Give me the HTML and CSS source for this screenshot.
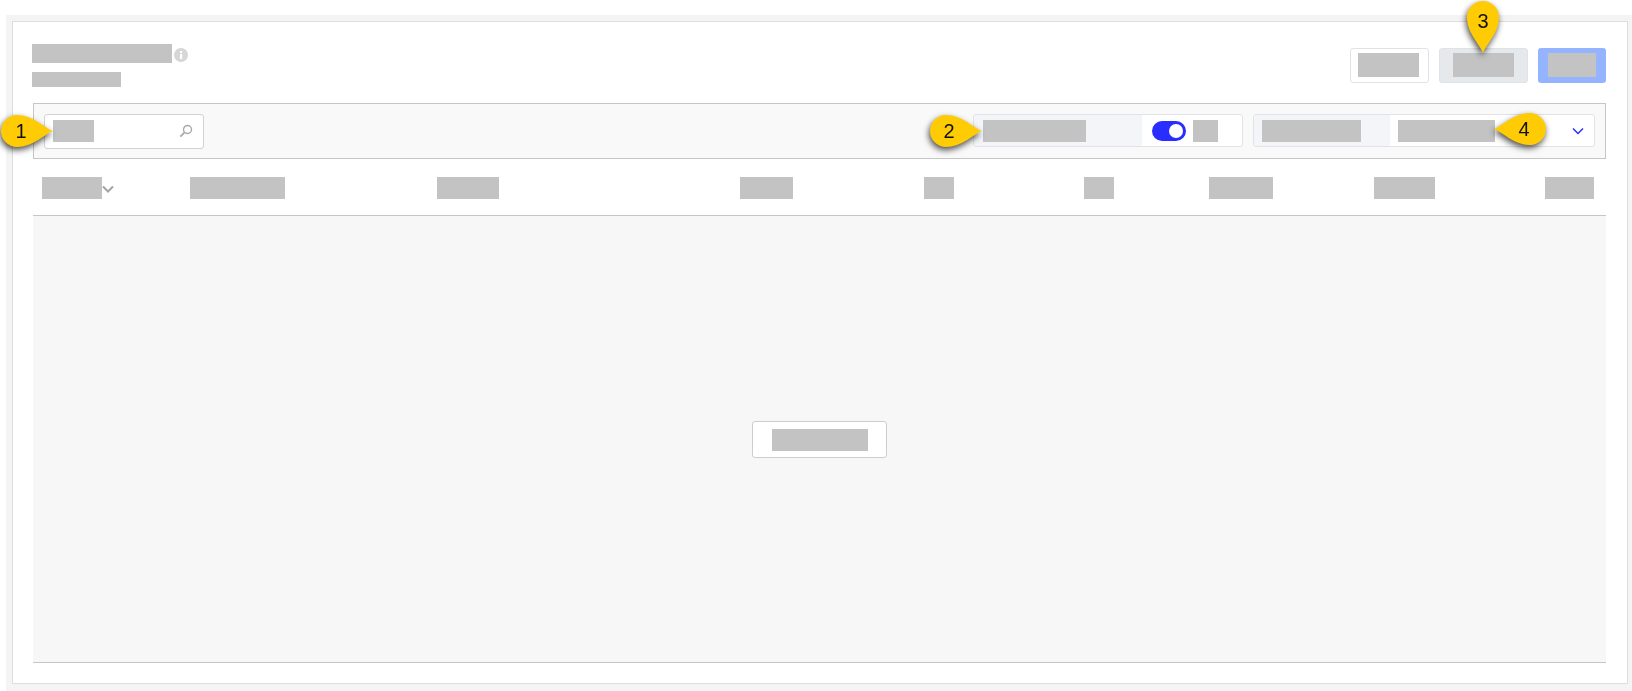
FILE: index.html
```html
<!DOCTYPE html>
<html lang="en">
<head>
  <meta charset="UTF-8" />
  <meta name="viewport" content="width=device-width, initial-scale=1.0"/>
  <title>Table settings</title>
  <link rel="stylesheet" href="styles.css">
</head>
<body>
  <div class="shell">
    <div class="card">
      <div class="page-head">
        <div class="head-left">
          <div class="title-row">
            <span class="bar bar-title"></span>
            <svg class="info-icon" viewBox="0 0 14 14">
              <circle cx="7" cy="7" r="7" fill="#d6d6d6"/>
              <rect x="6" y="6" width="2.2" height="5" fill="#fff"/>
              <rect x="6" y="3" width="2.2" height="2" fill="#fff"/>
            </svg>
          </div>
          <span class="bar bar-sub"></span>
        </div>
        <div class="head-actions">
          <div class="btn btn-plain"><span class="bar bar-btn"></span></div>
          <div class="btn btn-grey"><span class="bar bar-btn"></span></div>
          <div class="btn btn-blue"><span class="bar bar-btn-sm"></span></div>
        </div>
      </div>

      <div class="toolbar">
        <div class="search">
          <span class="bar bar-search"></span>
          <svg class="search-icon" viewBox="0 0 14 14">
            <circle cx="8.5" cy="5.5" r="4" fill="none" stroke="#a8a8a8" stroke-width="1.4"/>
            <path d="M5.6 8.4 1.4 12.6" stroke="#a8a8a8" stroke-width="1.8" fill="none"/>
          </svg>
        </div>
        <div class="toolbar-right">
          <div class="field field-toggle">
            <div class="field-label"><span class="bar bar-toggle-label"></span></div>
            <div class="field-value">
              <span class="toggle"><span class="toggle-knob"></span></span>
              <span class="bar bar-on"></span>
            </div>
          </div>
          <div class="field field-select">
            <div class="field-label"><span class="bar bar-select-label"></span></div>
            <div class="field-value">
              <span class="bar bar-select-value"></span>
              <svg class="select-arrow" viewBox="0 0 12 8">
                <path d="M1 1.5 6 6.5 11 1.5" fill="none" stroke="#2a2dff" stroke-width="1.5"/>
              </svg>
            </div>
          </div>
        </div>
      </div>

      <div class="table-head">
        <div class="col col-sort">
          <span class="bar bar-c1"></span>
          <svg class="sort-icon" viewBox="0 0 12 8">
            <path d="M1 1.5 6 6.5 11 1.5" fill="none" stroke="#a3a3a3" stroke-width="2"/>
          </svg>
        </div>
        <div class="col"><span class="bar bar-c2"></span></div>
        <div class="col"><span class="bar bar-c3"></span></div>
        <div class="col"><span class="bar bar-c4"></span></div>
        <div class="col"><span class="bar bar-c5"></span></div>
        <div class="col"><span class="bar bar-c6"></span></div>
        <div class="col"><span class="bar bar-c7"></span></div>
        <div class="col"><span class="bar bar-c8"></span></div>
        <div class="col"><span class="bar bar-c9"></span></div>
      </div>

      <div class="table-empty">
        <div class="empty-btn"><span class="bar bar-empty"></span></div>
      </div>
    </div>
  </div>

  <!-- numbered callouts on top of the screenshot -->
  <svg class="pin pin-1" viewBox="0 0 54 34">
    <path d="M53 17C43 13 33 1 17 1A16 16 0 0 0 17 33C33 33 43 21 53 17Z" fill="#ffcb05"/>
    <text x="21" y="24" text-anchor="middle">1</text>
  </svg>
  <svg class="pin pin-2" viewBox="0 0 54 34">
    <path d="M53 17C43 13 33 1 17 1A16 16 0 0 0 17 33C33 33 43 21 53 17Z" fill="#ffcb05"/>
    <text x="20" y="24" text-anchor="middle">2</text>
  </svg>
  <svg class="pin pin-3" viewBox="0 0 34 54">
    <path d="M17 53C13 43 1 33 1 17A16 16 0 0 1 33 17C33 33 21 43 17 53Z" fill="#ffcb05"/>
    <text x="17" y="28" text-anchor="middle">3</text>
  </svg>
  <svg class="pin pin-4" viewBox="0 0 54 34">
    <path d="M1 17C11 13 21 1 37 1A16 16 0 0 1 37 33C21 33 11 21 1 17Z" fill="#ffcb05"/>
    <text x="31" y="24" text-anchor="middle">4</text>
  </svg>
</body>
</html>
```

FILE: styles.css
```css
* {
  margin: 0;
  padding: 0;
  box-sizing: border-box;
  font-family: "Liberation Sans", sans-serif;
}

html, body {
  height: 100%;
  background: #fff;
  overflow: hidden;
}

body {
  padding: 15px 0 0 6px;
}

.shell {
  height: 676px;
  background: #f4f4f4;
  padding: 6px 4px 7px 6px;
}

.card {
  height: 663px;
  background: #fff;
  border: 1px solid #dedede;
  padding: 22px 21px 0 20px;
}

.bar {
  display: block;
  background: #c3c3c3;
  height: 22px;
  flex-shrink: 0;
}

/* header */
.page-head {
  display: flex;
  justify-content: space-between;
  height: 59px;
}

.title-row {
  display: flex;
  align-items: center;
  gap: 2px;
  margin-left: -1px;
  margin-bottom: 9px;
}

.bar-title {
  width: 140px;
  height: 19px;
}

.info-icon {
  width: 14px;
  height: 14px;
  margin-top: 2px;
}

.bar-sub {
  width: 89px;
  height: 15px;
  margin-left: -1px;
}

.head-actions {
  display: flex;
  gap: 10px;
  margin-top: 4px;
}

.btn {
  height: 35px;
  border-radius: 3px;
  display: flex;
  align-items: center;
  justify-content: center;
  padding-bottom: 1px;
}

.bar-btn {
  width: 61px;
  height: 24px;
}

.bar-btn-sm {
  width: 48px;
  height: 24px;
}

.btn-plain {
  width: 79px;
  background: #fff;
  border: 1px solid #dfe3e8;
  padding-right: 2px;
}

.btn-grey {
  width: 89px;
  background: #e6e9ec;
  border: 1px solid #dfe3e8;
}

.btn-blue {
  width: 68px;
  background: #94b4ff;
}

/* toolbar */
.toolbar {
  height: 56px;
  background: #f9f9f9;
  border: 1px solid #c6c6c6;
  display: flex;
  align-items: center;
  justify-content: space-between;
  padding: 0 10px 0 10px;
}

.search {
  width: 160px;
  height: 35px;
  background: #fff;
  border: 1px solid #d2d2d2;
  border-radius: 3px;
  display: flex;
  align-items: center;
  justify-content: space-between;
  padding: 0 10px 0 8px;
}

.bar-search {
  width: 41px;
}

.search-icon {
  width: 14px;
  height: 14px;
}

.toolbar-right {
  display: flex;
  gap: 10px;
  margin-bottom: 1px;
}

.field {
  height: 33px;
  background: #fff;
  border: 1px solid #e0e3e8;
  border-radius: 3px;
  display: flex;
  overflow: hidden;
}

.field-label {
  background: #f4f5f8;
  display: flex;
  align-items: center;
  padding-left: 9px;
}

.field-value {
  display: flex;
  align-items: center;
}

.field-toggle {
  width: 270px;
}

.field-toggle .field-label {
  width: 168px;
}

.field-toggle .field-value {
  padding-left: 10px;
  gap: 7px;
}

.bar-toggle-label {
  width: 103px;
}

.toggle {
  width: 34px;
  height: 20px;
  border-radius: 10px;
  background: #2a2dff;
  display: flex;
  align-items: center;
  justify-content: flex-end;
  padding-right: 3px;
}

.toggle-knob {
  width: 14px;
  height: 14px;
  border-radius: 50%;
  background: #fff;
}

.bar-on {
  width: 25px;
}

.field-select {
  width: 342px;
}

.field-select .field-label {
  width: 136px;
  padding-left: 8px;
}

.field-select .field-value {
  flex: 1;
  padding: 0 10px 0 8px;
  justify-content: space-between;
}

.bar-select-label {
  width: 99px;
}

.bar-select-value {
  width: 97px;
}

.select-arrow {
  width: 12px;
  height: 8px;
}

/* table */
.table-head {
  height: 57px;
  display: grid;
  grid-template-columns: 148px 247px 303px 184px 160px 125px 165px 171px 49px;
  padding: 18px 0 0 9px;
  border-bottom: 1px solid #c6c6c6;
}

.col {
  display: flex;
  align-items: flex-start;
}

.col-sort {
  gap: 0;
}

.sort-icon {
  width: 12px;
  height: 8px;
  margin-top: 8px;
}

.bar-c1 { width: 60px; }
.bar-c2 { width: 95px; }
.bar-c3 { width: 62px; }
.bar-c4 { width: 53px; }
.bar-c5 { width: 30px; }
.bar-c6 { width: 30px; }
.bar-c7 { width: 64px; }
.bar-c8 { width: 61px; }
.bar-c9 { width: 49px; }

.table-empty {
  height: 447px;
  background: #f7f7f7;
  border-bottom: 1px solid #c6c6c6;
  display: flex;
  align-items: center;
  justify-content: center;
  padding-top: 1px;
}

.empty-btn {
  width: 135px;
  height: 37px;
  background: #fff;
  border: 1px solid #cdcdcd;
  border-radius: 3px;
  display: flex;
  align-items: center;
  justify-content: center;
}

.bar-empty {
  width: 96px;
}

/* callouts */
.pin {
  position: absolute;
  overflow: visible;
  filter: drop-shadow(-1px 3px 3px rgba(0, 0, 0, 0.7));
}

.pin text {
  font-size: 20px;
  fill: #111;
}

.pin-1 {
  left: 0;
  top: 114px;
  width: 54px;
  height: 34px;
}

.pin-2 {
  left: 929px;
  top: 114px;
  width: 54px;
  height: 34px;
}

.pin-3 {
  left: 1466px;
  top: 0;
  width: 34px;
  height: 54px;
}

.pin-4 {
  left: 1493px;
  top: 112px;
  width: 54px;
  height: 34px;
}
```
